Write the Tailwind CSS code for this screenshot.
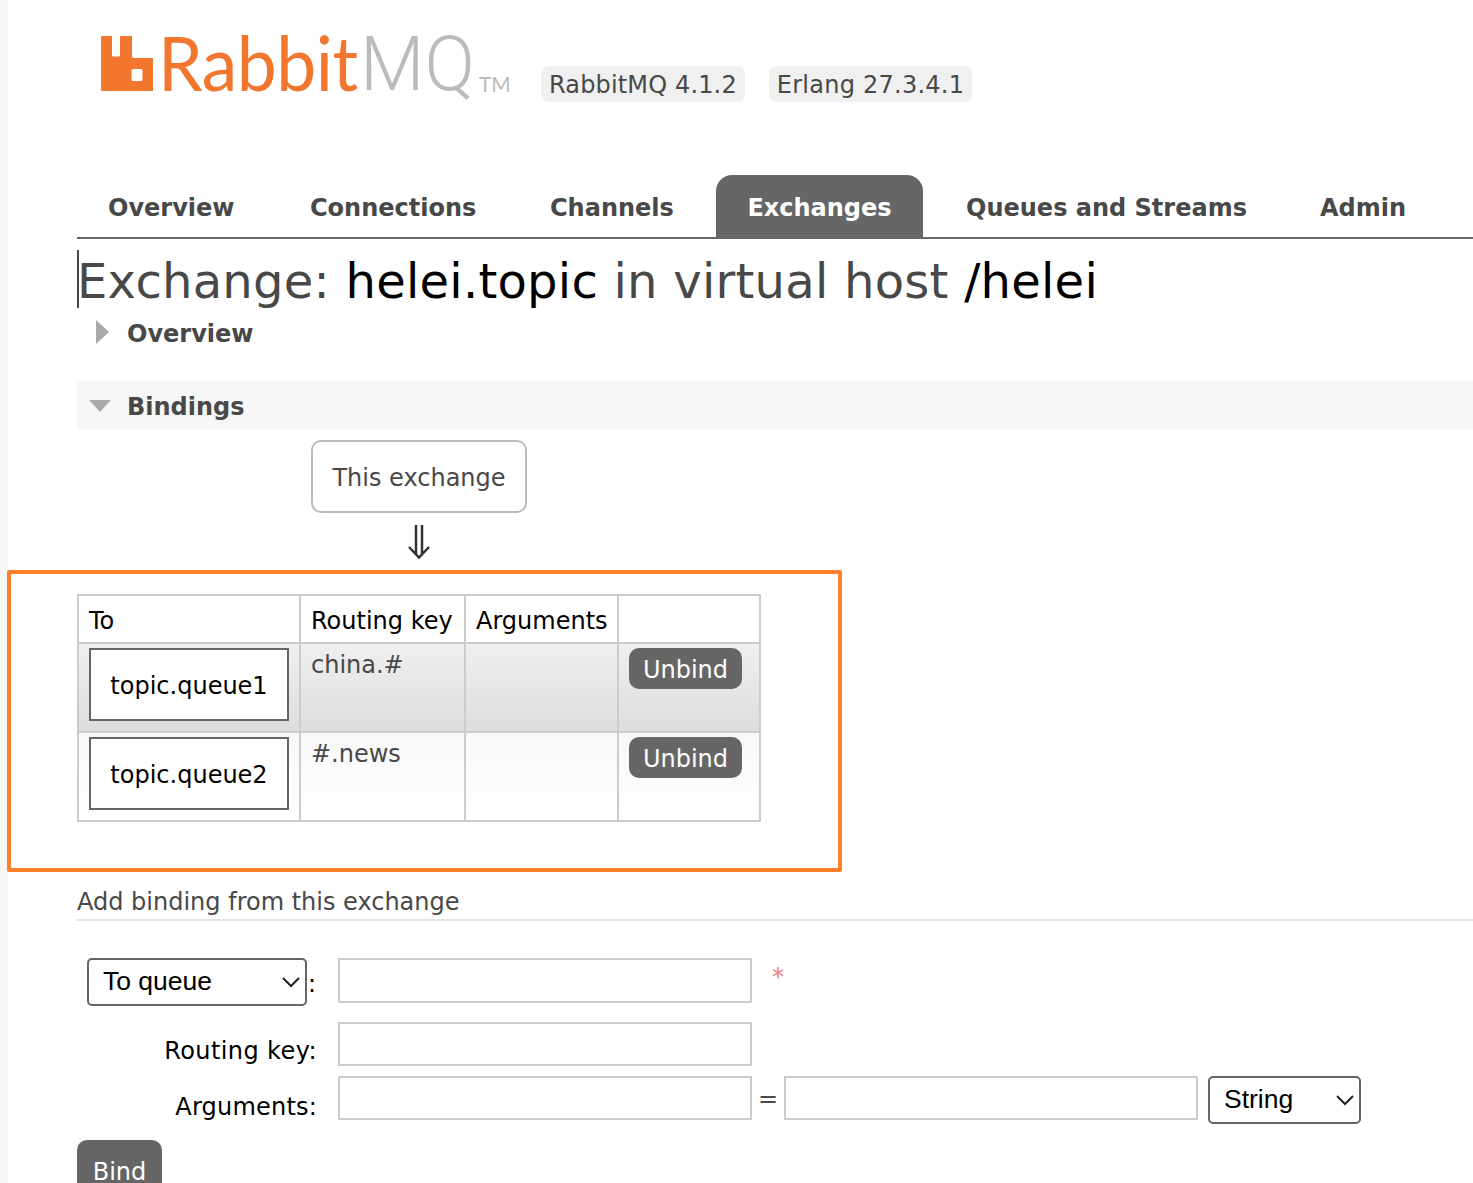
<!DOCTYPE html>
<html lang="en">
<head>
<meta charset="utf-8">
<title>RabbitMQ Management</title>
<script src="https://cdn.jsdelivr.net/npm/@tailwindcss/browser@4"></script>
</head>
<body class="bg-white overflow-hidden font-['DejaVu_Sans',Verdana,sans-serif] text-[#484848] text-[24px]">
<div class="relative w-[1473px] h-[1183px] pl-[77px] border-l-[8px] border-[#f7f7f7] box-border">
  <div class="-ml-[8px] h-[1183px] overflow-hidden">
  <!-- header -->
  <header class="flex items-start h-[175px]">
    <div class="flex items-start ml-[24px] mt-[36px] w-[440px] h-[60px]">
      <svg class="shrink-0 -ml-[1px] w-[53px] h-[55px]" viewBox="0 0 53 55" aria-hidden="true"><path fill="#f2762e" fill-rule="evenodd" d="M1 0h10a1 1 0 0 1 1 1v18a1.500 1.500 0 0 0 1.500 1.500h5a1.500 1.500 0 0 0 1.500-1.500v-18a1 1 0 0 1 1-1h10a1 1 0 0 1 1 1v19a2 2 0 0 0 2 2h18a2 2 0 0 1 2 2v29a2 2 0 0 1-2 2h-50a1 1 0 0 1-1-1v-53a1 1 0 0 1 1-1zM33 33a1.500 1.500 0 0 0-1.500 1.500v9a1.500 1.500 0 0 0 1.500 1.500h8a1.500 1.500 0 0 0 1.500-1.500v-9a1.500 1.500 0 0 0-1.500-1.500z"/></svg>
      <span class="block shrink-0 w-[202px] ml-[5px] -mt-[2px] font-['Lato',sans-serif] text-[76px] leading-[55px] tracking-[-0.5px] text-[#f2762e] origin-left scale-x-[.94]">Rabbit</span>
      <span class="block shrink-0 w-[119px] mt-[1px] font-['Roboto',sans-serif] font-light text-[76px] leading-[55px] text-[#bbbbbb] origin-left scale-x-[.98]">MQ</span>
      <span class="block shrink-0 font-['Lato',sans-serif] text-[22px] leading-[22px] text-[#bbbbbb] mt-[37px] origin-left scale-x-[.95]">TM</span>
    </div>
    <div class="flex gap-[24px] mt-[66px]">
      <span class="bg-[#f0f0f0] rounded-[8px] h-[36px] leading-[39px] px-[8px] tracking-[0.15px] text-[#484848] whitespace-nowrap">RabbitMQ 4.1.2</span>
      <span class="bg-[#f0f0f0] rounded-[8px] h-[36px] leading-[39px] px-[8px] tracking-[0.25px] text-[#484848] whitespace-nowrap">Erlang 27.3.4.1</span>
    </div>
  </header>
  <!-- nav -->
  <nav class="flex h-[64px] border-b-2 border-[#666666] font-bold text-[#484848] items-stretch w-[1400px]">
    <a class="pl-[31px] w-[201px] leading-[66px] whitespace-nowrap">Overview</a>
    <a class="pl-[32px] w-[240px] leading-[66px] whitespace-nowrap">Connections</a>
    <a class="pl-[32px] w-[198px] leading-[66px] whitespace-nowrap">Channels</a>
    <a class="w-[207px] text-center leading-[66px] bg-[#666666] text-white rounded-t-[16px] whitespace-nowrap">Exchanges</a>
    <a class="pl-[43px] w-[397px] leading-[66px] whitespace-nowrap">Queues and Streams</a>
    <a class="leading-[66px] whitespace-nowrap">Admin</a>
  </nav>
  <!-- title -->
  <h1 class="text-[48px] leading-[62px] h-[58px] mt-[11px] font-normal border-l-2 border-[#484848] whitespace-nowrap text-[#484848] indent-[-2px] tracking-[0.25px]">Exchange: <span class="text-black">helei.topic</span> in virtual host <span class="text-black">/helei</span></h1>
  <!-- overview section -->
  <div class="flex items-center h-[50px] mt-[1px] font-bold">
    <svg class="ml-[19px] w-[13px] h-[24px] -mt-[4px]" viewBox="0 0 13 24" aria-hidden="true"><path fill="#aaaaaa" d="M0 0l13 12L0 24z"/></svg>
    <span class="ml-[18px]">Overview</span>
  </div>
  <!-- bindings -->
  <div class="flex items-center h-[49px] mt-[22px] bg-[#f7f7f7] font-bold">
    <svg class="ml-[12px] w-[22px] h-[12px]" viewBox="0 0 22 12" aria-hidden="true"><path fill="#aaaaaa" d="M0 0h22L11 12z"/></svg>
    <span class="ml-[16px] pt-[2px]">Bindings</span>
  </div>
  <div class="ml-[234px] mt-[10px] w-[216px] h-[73px] border-2 border-[#bbbbbb] rounded-[10px] flex items-center justify-center pt-[2px]">This exchange</div>
  <div class="ml-[234px] w-[216px] h-[57px] flex justify-center pt-[12px]">
    <svg class="w-[24px] h-[34px]" viewBox="0 0 24 34" aria-hidden="true"><path fill="none" stroke="#333333" stroke-width="2.500" d="M9 0v30M15 0v30M2 22l10 10.500L22 22"/></svg>
  </div>
  <!-- table -->
  <table class="mt-[24px] border-collapse border-2 border-[#cccccc] w-[682px] table-fixed text-[#000]">
    <colgroup><col class="w-[222px]"><col class="w-[165px]"><col class="w-[153px]"><col class="w-[142px]"></colgroup>
    <thead>
      <tr class="h-[48px]">
        <th class="border-2 border-[#cccccc] font-normal text-left pl-[10px] align-middle pt-[4px]">To</th>
        <th class="border-2 border-[#cccccc] font-normal text-left pl-[10px] align-middle pt-[4px] whitespace-nowrap">Routing key</th>
        <th class="border-2 border-[#cccccc] font-normal text-left pl-[10px] align-middle pt-[4px]">Arguments</th>
        <th class="border-2 border-[#cccccc]"></th>
      </tr>
    </thead>
    <tbody>
      <tr class="h-[89px] bg-linear-to-b from-[#f0f0f0] to-[#dddddd]">
        <td class="border-2 border-[#cccccc] p-0 align-top pl-[10px] pt-[4px]"><div class="w-[200px] h-[73px] border-2 border-[#666666] bg-white flex items-center justify-center pt-[2px]">topic.queue1</div></td>
        <td class="border-2 border-[#cccccc] align-top pl-[10px] pt-[3px] text-[#484848]">china.#</td>
        <td class="border-2 border-[#cccccc]"></td>
        <td class="border-2 border-[#cccccc] align-top pl-[10px] pt-[4px]"><div class="w-[113px] h-[41px] rounded-[10px] bg-[#666666] text-white flex items-center justify-center pt-[2px]">Unbind</div></td>
      </tr>
      <tr class="h-[89px] bg-linear-to-b from-[#f8f8f8] to-[#ffffff]">
        <td class="border-2 border-[#cccccc] p-0 align-top pl-[10px] pt-[4px]"><div class="w-[200px] h-[73px] border-2 border-[#666666] bg-white flex items-center justify-center pt-[2px]">topic.queue2</div></td>
        <td class="border-2 border-[#cccccc] align-top pl-[10px] pt-[3px] text-[#484848]">#.news</td>
        <td class="border-2 border-[#cccccc]"></td>
        <td class="border-2 border-[#cccccc] align-top pl-[10px] pt-[4px]"><div class="w-[113px] h-[41px] rounded-[10px] bg-[#666666] text-white flex items-center justify-center pt-[2px]">Unbind</div></td>
      </tr>
    </tbody>
  </table>
  <!-- add binding -->
  <div class="mt-[64px] h-[35px] border-b-2 border-[#e4e4e4] leading-[32px]">Add binding from this exchange</div>
  <div class="flex items-start mt-[37px] h-[64px]">
    <div class="relative ml-[10px] w-[220px] h-[48px]">
      <select class="appearance-none w-full h-full border-2 border-[#666666] rounded-[5px] bg-white pl-[14px] font-['Liberation_Sans',Arial,sans-serif] text-[26.500px] text-black"><option>To queue</option></select>
      <svg class="absolute right-[7px] top-[19px] w-[18px] h-[11px] pointer-events-none" viewBox="0 0 18 11" aria-hidden="true"><path fill="none" stroke="#222" stroke-width="2" d="M1 1l8 8 8-8"/></svg>
    </div>
    <span class="w-[31px] pl-[1px] mt-[8px] text-black">:</span>
    <div class="w-[414px] h-[45px] border-2 border-[#cccccc]"></div>
    <span class="ml-[20px] text-[#f08080] mt-[1px]">*</span>
  </div>
  <div class="flex items-start h-[54px]">
    <span class="w-[240px] text-right mt-[11px] text-black whitespace-nowrap tracking-[0.4px]">Routing key:</span>
    <div class="ml-[21px] w-[414px] h-[44px] border-2 border-[#cccccc]"></div>
  </div>
  <div class="flex items-start h-[64px]">
    <span class="w-[240px] text-right mt-[13px] text-black whitespace-nowrap tracking-[0.2px]">Arguments:</span>
    <div class="ml-[21px] w-[414px] h-[44px] border-2 border-[#cccccc]"></div>
    <span class="w-[32px] text-center mt-[5px]">=</span>
    <div class="w-[414px] h-[44px] border-2 border-[#cccccc]"></div>
    <div class="relative ml-[10px] w-[153px] h-[48px]">
      <select class="appearance-none w-full h-full border-2 border-[#666666] rounded-[5px] bg-white pl-[14px] font-['Liberation_Sans',Arial,sans-serif] text-[26.500px] text-black"><option>String</option></select>
      <svg class="absolute right-[7px] top-[19px] w-[18px] h-[11px] pointer-events-none" viewBox="0 0 18 11" aria-hidden="true"><path fill="none" stroke="#222" stroke-width="2" d="M1 1l8 8 8-8"/></svg>
    </div>
  </div>
  <div class="w-[85px] h-[60px] bg-[#666666] rounded-t-[10px] text-white text-center pt-[17px] leading-[30px]">Bind</div>
  </div>
  <!-- annotation -->
  <div class="absolute left-[-1px] top-[570px] w-[835px] h-[302px] border-4 border-[#ff7f2a] rounded-[2px] pointer-events-none"></div>
</div>
</body>
</html>
